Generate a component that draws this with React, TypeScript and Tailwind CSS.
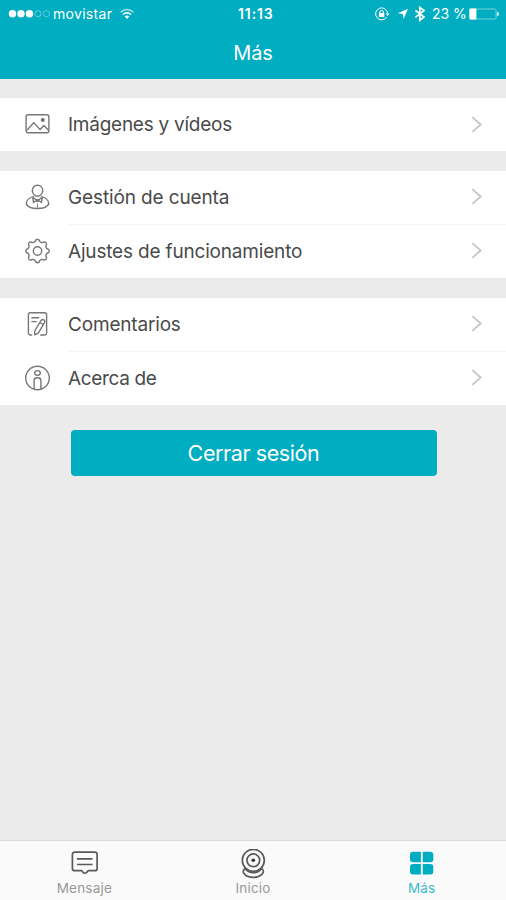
import type { ReactNode } from "react";

interface RowProps {
  icon: ReactNode;
  label: string;
  labelClass: string;
  divided?: boolean;
}

function ImageIcon() {
  return (
    <svg width="26" height="26" viewBox="0 0 26 26" fill="none" stroke="#777" strokeWidth="1.4">
      <rect x="1.1" y="3.8" width="22.8" height="18" rx="2" />
      <path d="M2 19.3 L8.8 11.6 L15.1 18.6 L18.9 14.6 L23.5 19.2" strokeLinejoin="round" />
      <circle cx="17.8" cy="8.9" r="1.3" fill="#555" />
    </svg>
  );
}

function UserIcon() {
  return (
    <svg width="26" height="26" viewBox="0.5 0 26 26" fill="none" stroke="#777" strokeWidth="1.4">
      <path d="M9.7 10.8 C8.4 9.6 7.8 8.2 7.8 6.4 C7.8 3.3 10 1.2 13 1.2 C16 1.2 18.2 3.3 18.2 6.4 C18.2 8.2 17.6 9.6 16.3 10.8 C14.4 12.4 11.6 12.4 9.7 10.8Z" />
      <path d="M9.6 12.4 C5 13.4 1.7 16.5 1.7 19.9 C3 22.8 7.4 24.5 13 24.5 C18.6 24.5 23 22.8 24.3 19.9 C24.3 16.5 21 13.4 16.4 12.4" />
      <path d="M8.2 13.2 L9 18.4 L13 16 L17 18.4 L17.8 13.2 M9.2 13.8 L13 17 L16.8 13.8" />
      <path d="M13 19.5 V24" strokeWidth="0.9" />
      <circle cx="13" cy="16.6" r="1" />
    </svg>
  );
}

function GearIcon() {
  return (
    <svg width="26" height="26" viewBox="0.5 0 26 26" fill="none" stroke="#777" strokeWidth="1.4" strokeLinejoin="round">
      <path d="M10.7 3.5 Q11.2 1.2 13 1.2 Q14.8 1.2 15.3 3.5 Q16.7 4.6 18.1 4.6 Q20.1 3.4 21.4 4.6 Q22.6 5.9 21.4 7.9 Q21.4 9.3 22.5 10.7 Q24.8 11.2 24.8 13 Q24.8 14.8 22.5 15.3 Q21.4 16.7 21.4 18.1 Q22.6 20.1 21.4 21.4 Q20.1 22.6 18.1 21.4 Q16.7 21.4 15.3 22.5 Q14.8 24.8 13 24.8 Q11.2 24.8 10.7 22.5 Q9.3 21.4 7.9 21.4 Q5.9 22.6 4.6 21.4 Q3.4 20.1 4.6 18.1 Q4.6 16.7 3.5 15.3 Q1.2 14.8 1.2 13 Q1.2 11.2 3.5 10.7 Q4.6 9.3 4.6 7.9 Q3.4 5.9 4.6 4.6 Q5.9 3.4 7.9 4.6 Q9.3 4.6 10.7 3.5Z" />
      <circle cx="13" cy="13" r="4.2" />
    </svg>
  );
}

function NoteIcon() {
  return (
    <svg width="26" height="26" viewBox="0.5 0 26 26" fill="none" stroke="#777" strokeWidth="1.4" strokeLinecap="round" strokeLinejoin="round">
      <path d="M7.2 24 H5.6 Q3.9 24 3.9 22.3 V3.5 Q3.9 1.7 5.7 1.7 H20.3 Q22.1 1.7 22.1 3.5 V22.3 Q22.1 24 20.4 24 H16.2" />
      <path d="M7.4 6.7 H14.2 M7.4 10.6 H11.6" />
      <path d="M16.4 9.6 Q17.6 7.8 19.3 8.8 Q20.9 9.8 20 11.6 L13.8 22.2 L10.2 23.8 L10.2 20Z M16 12 L18.6 13.4" />
    </svg>
  );
}

function InfoIcon() {
  return (
    <svg width="26" height="26" viewBox="0.5 0 26 26" fill="none" stroke="#777" strokeWidth="1.4">
      <circle cx="13" cy="13" r="11.8" />
      <ellipse cx="13" cy="7.9" rx="2.8" ry="2.3" />
      <path d="M9.6 24 V15.2 Q9.6 12.8 13 12.8 Q16.4 12.8 16.4 15.2 V24" />
    </svg>
  );
}

function MessageIcon() {
  return (
    <svg width="30" height="30" viewBox="0 0 30 30" fill="none" stroke="#5a5a5a" strokeWidth="1.7" strokeLinejoin="round">
      <path d="M5.7 3.2 H25.8 Q28.1 3.2 28.1 5.5 V19.4 Q28.1 21.7 25.8 21.7 H19.1 Q17.7 24.3 15.9 24.3 Q13.9 24.3 12.7 21.7 H5.7 Q3.4 21.7 3.4 19.4 V5.5 Q3.4 3.2 5.7 3.2Z" />
      <path d="M7.9 9.9 H23.5 M7.9 15.5 H23.5" />
    </svg>
  );
}

function CameraIcon() {
  return (
    <svg width="30" height="30" viewBox="0 0.5 30 30" fill="none" stroke="#5a5a5a" strokeWidth="1.7">
      <circle cx="15.3" cy="11.8" r="11" />
      <circle cx="15.3" cy="11.8" r="6.4" />
      <circle cx="15.3" cy="11.8" r="1.8" fill="#333" stroke="none" />
      <path d="M7.3 19.8 C4.3 22 4.9 24.3 6.7 25.8 C10.9 29.8 19.7 29.8 23.9 25.8 C25.7 24.3 26.3 22 23.3 19.8" />
      <path d="M7.3 20.4 Q10.6 24.2 15.3 24.2 Q20 24.2 23.3 20.4" />
    </svg>
  );
}

function GridIcon() {
  return (
    <svg width="30" height="30" viewBox="0 0 30 30" fill="#00adc1">
      <path d="M6 2.7 H13.9 V13.2 H6.2 Q3 13.2 3 10.3 V5.7 Q3 2.7 6 2.7Z" />
      <path d="M15.7 2.7 H23.3 Q26.3 2.7 26.3 5.7 V10.3 Q26.3 13.2 23.3 13.2 H15.7Z" />
      <path d="M6 15 H13.9 V25.5 H6 Q3 25.5 3 22.5 V17.8 Q3 15 6 15Z" />
      <path d="M15.7 15 H23.3 Q26.3 15 26.3 17.8 V22.5 Q26.3 25.5 23.3 25.5 H15.7Z" />
    </svg>
  );
}

function StatusBar() {
  return (
    <div className="flex h-7 items-center text-white">
      <svg className="ml-2 shrink-0" width="43" height="10" viewBox="0 0 43 10" fill="#fff">
        <circle cx="4.5" cy="4.7" r="3.7" />
        <circle cx="13" cy="4.7" r="3.7" />
        <circle cx="21.5" cy="4.7" r="3.7" />
        <g fill="none" stroke="#6fd0dc" strokeWidth="0.9">
          <circle cx="30" cy="4.7" r="3.1" />
          <circle cx="38.5" cy="4.7" r="3.1" />
        </g>
      </svg>
      <span className="ml-0.5 w-[66px] text-[14px] leading-7 tracking-[0.3px]">movistar</span>
      <svg width="16" height="12" viewBox="0 0 16 12" fill="none" stroke="#fff">
        <path d="M1.5 4.3 Q8 -1.3 14.5 4.3" strokeWidth="1.5" opacity="0.65" />
        <path d="M3.9 6.5 Q8 3.1 12.1 6.5" strokeWidth="1.6" />
        <path d="M8 11 L5.7 8.3 Q8 6.6 10.3 8.3Z" fill="#fff" stroke="none" />
      </svg>
      <span className="ml-[103px] w-[137px] text-[14px] leading-7 font-semibold tracking-[0.9px]">11:13</span>
      <svg width="15" height="14" viewBox="0 0 15 14" fill="none" stroke="#fff">
        <path d="M11.6 10.2 A6 6 0 1 1 12.6 6.8" strokeWidth="1" />
        <path d="M10.8 6.6 H14.6 L12.7 9Z" fill="#fff" stroke="none" />
        <rect x="3.9" y="6" width="5.4" height="4" fill="#fff" stroke="none" />
        <path d="M4.8 6.2 V5 Q4.8 3.5 6.6 3.5 Q8.4 3.5 8.4 5 V6.2" strokeWidth="1" />
      </svg>
      <svg className="ml-[7px]" width="12" height="12" viewBox="0 0 12 12" fill="#fff">
        <path d="M11 0.8 L6.6 11 L5.8 6 L0.8 5.2Z" />
      </svg>
      <svg className="ml-[4.5px]" width="12" height="16" viewBox="0 0 12 16" fill="none" stroke="#fff" strokeWidth="1.7">
        <path d="M1.4 4.3 L10 11.1 L5.8 14.2 V1.4 L10 4.5 L1.4 11.3" />
      </svg>
      <span className="ml-[6.5px] w-9 text-[14px] leading-7 whitespace-nowrap">23 %</span>
      <svg className="ml-px" width="31" height="13" viewBox="0 0 31 13" fill="none">
        <rect x="0.9" y="1" width="26.2" height="10" rx="1.6" stroke="#85d6e0" strokeWidth="0.9" />
        <rect x="0.4" y="0.5" width="7" height="11" rx="1" fill="#fff" />
        <path d="M28 3.7 Q30.2 4.3 30.2 6 Q30.2 7.7 28 8.3Z" fill="#c5edf1" />
      </svg>
    </div>
  );
}

function Row({ icon, label, labelClass, divided }: RowProps) {
  return (
    <li className="flex h-[53.5px] items-center pl-[24.5px]">
      <span className="w-[43.5px] shrink-0 pb-px">{icon}</span>
      <div className={`flex h-full flex-1 items-center justify-between pr-[23px] ${divided ? "border-b border-[#f4f4f4]" : ""}`}>
        <span className={`text-[19px] whitespace-nowrap text-[#4a4a4a] ${labelClass}`}>{label}</span>
        <svg width="13" height="18" viewBox="0 0 13 18" fill="none" stroke="#c4c4c4" strokeWidth="1.7">
          <path d="M2.3 1.1 L10.7 8.5 L2.3 15.9" />
        </svg>
      </div>
    </li>
  );
}

function Tab({ icon, label, active }: { icon: ReactNode; label: string; active?: boolean }) {
  return (
    <button className="flex flex-1 flex-col items-center pt-2">
      {icon}
      <span className={`mt-px text-[13.5px] leading-4 tracking-[0.2px] ${active ? "text-[#3bbccb]" : "text-[#999]"}`}>{label}</span>
    </button>
  );
}

export default function App() {
  return (
    <div className="flex h-[900px] w-[506px] flex-col overflow-hidden bg-[#ebebeb] font-['Inter',sans-serif]">
      <header className="h-[79px] shrink-0 bg-[#00adc1]">
        <StatusBar />
        <h1 className="text-center text-[20px] leading-[50px] tracking-[-0.2px] text-white">Más</h1>
      </header>

      <main className="flex flex-1 flex-col">
        <ul className="mt-[19px] h-[53px] bg-white">
          <Row icon={<ImageIcon />} label="Imágenes y vídeos" labelClass="tracking-[-0.25px]" />
        </ul>
        <ul className="mt-5 bg-white">
          <Row icon={<UserIcon />} label="Gestión de cuenta" labelClass="pt-0.5 tracking-[-0.13px]" divided />
          <Row icon={<GearIcon />} label="Ajustes de funcionamiento" labelClass="pt-0.5 tracking-[-0.18px]" />
        </ul>
        <ul className="mt-5 bg-white">
          <Row icon={<NoteIcon />} label="Comentarios" labelClass="pt-0.5 tracking-[-0.18px]" divided />
          <Row icon={<InfoIcon />} label="Acerca de" labelClass="pt-0.5 tracking-[-0.35px]" />
        </ul>
        <button className="mt-[25px] ml-[70.5px] h-[46px] w-[366px] rounded bg-[#00adc1] text-[21.5px] tracking-[-0.4px] text-white">
          Cerrar sesión
        </button>
      </main>

      <nav className="flex h-[60px] shrink-0 border-t border-[#dcdcdc] bg-[#fafafa]">
        <Tab icon={<MessageIcon />} label="Mensaje" />
        <Tab icon={<CameraIcon />} label="Inicio" />
        <Tab icon={<GridIcon />} label="Más" active />
      </nav>
    </div>
  );
}
